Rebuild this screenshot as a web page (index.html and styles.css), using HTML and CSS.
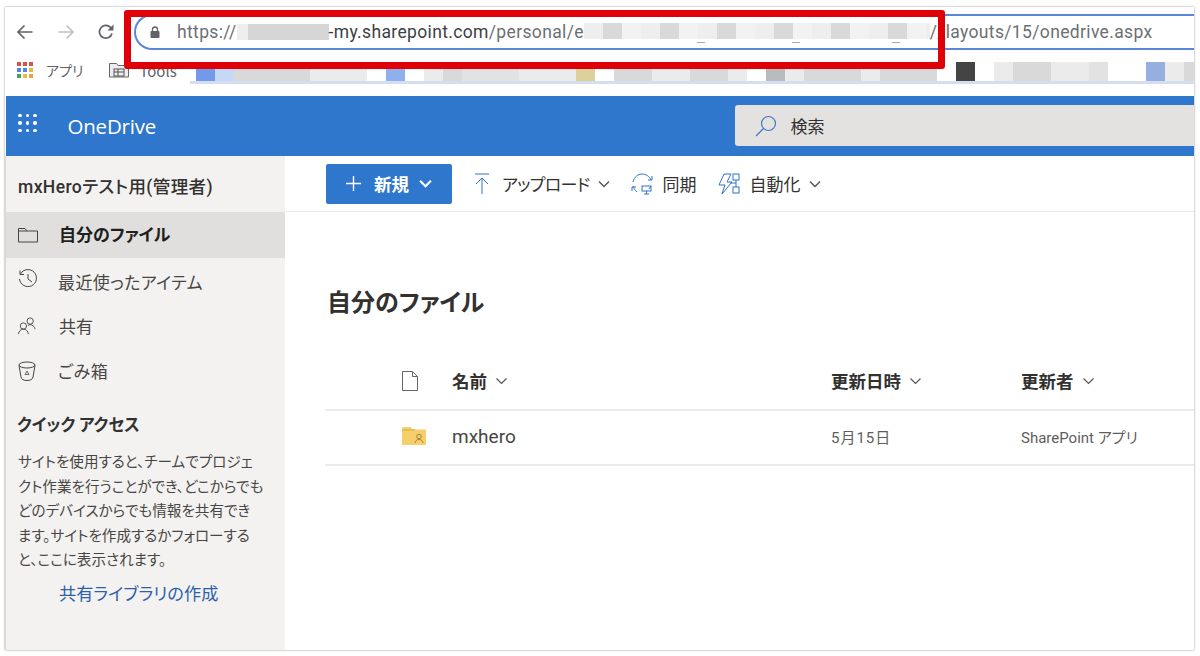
FILE: index.html
```html
<!DOCTYPE html>
<html lang="ja">
<head>
<meta charset="utf-8">
<title>OneDrive</title>
<link rel="stylesheet" href="styles.css">
</head>
<body>
<div class="window">
  <div class="toolbar">
    <svg class="nav-icon" viewBox="0 0 18 18"><path d="M16.5 9H2M8.5 2.5 2 9l6.5 6.5" fill="none" stroke="#5f6368" stroke-width="1.7"/></svg>
    <svg class="nav-icon" viewBox="0 0 18 18"><path d="M1.5 9H16M9.5 2.5 16 9l-6.5 6.5" fill="none" stroke="#bdc1c6" stroke-width="1.7"/></svg>
    <svg class="nav-icon" viewBox="0 0 18 18"><path d="M15 10.5A6.4 6.4 0 1 1 13.3 4.2L15.5 6.3" fill="none" stroke="#5f6368" stroke-width="1.7"/><path d="M16.5 1.5v6h-6z" fill="#5f6368"/></svg>
    <div class="omnibox">
      <svg class="lock" viewBox="0 0 10 12"><path d="M2.5 5V3.5a2.5 2.5 0 0 1 5 0V5" fill="none" stroke="#5f6368" stroke-width="1.3"/><rect x="0.5" y="5" width="9" height="7" rx="1" fill="#5f6368"/></svg>
      <span class="url">https://</span>
      <span class="blur blur-a"></span>
      <span class="url url-dark">-my.sharepoint.com</span><span class="url">/personal/e</span>
      <span class="blur blur-b"></span>
      <span class="url">/_layouts/15/onedrive.aspx</span>
    </div>
  </div>
  <div class="bookmarks">
    <svg class="apps" viewBox="0 0 16 16">
      <rect x="0" y="0" width="4" height="4" fill="#d9534a"/><rect x="6" y="0" width="4" height="4" fill="#d9534a"/><rect x="12" y="0" width="4" height="4" fill="#d9534a"/>
      <rect x="0" y="6" width="4" height="4" fill="#4f86e8"/><rect x="6" y="6" width="4" height="4" fill="#4f86e8"/><rect x="12" y="6" width="4" height="4" fill="#e8b93c"/>
      <rect x="0" y="12" width="4" height="4" fill="#46a35c"/><rect x="6" y="12" width="4" height="4" fill="#e8b93c"/><rect x="12" y="12" width="4" height="4" fill="#e8a33c"/>
    </svg>
    <span class="bm-label">アプリ</span>
    <svg class="bm-folder" viewBox="0 0 20 16"><path d="M.5 15V1.5h7l1.5 2h10.500V15z" fill="#eee" stroke="#666"/><rect x="5" y="7" width="10" height="7" fill="none" stroke="#555"/><path d="M5 10h10M9 7v7" stroke="#555"/></svg>
    <span class="bm-label bm-tools">Tools</span>
    <div class="bm-strip">
      <i class="c1 w19"></i><i class="c2 w19"></i><i class="c3 w38"></i><i class="c3 w38"></i><i class="c4 w38"></i><i class="c4 w19"></i><i class="c5 w19"></i><i class="c1b w19"></i><i class="c5 w19"></i><i class="c4 w19"></i><i class="c3 w19"></i><i class="c3b w57"></i><i class="c4 w57"></i><i class="c6 w19"></i><i class="c5 w19"></i><i class="c3 w38"></i><i class="c4 w38"></i><i class="c3 w38"></i><i class="c4 w19"></i><i class="c5 w19"></i><i class="c7 w19"></i><i class="c4 w19"></i><i class="c3 w57"></i><i class="c4 w19"></i><i class="c3 w57"></i><i class="c5 w19"></i><i class="c8 w19"></i><i class="c5 w19"></i><i class="c4 w19"></i><i class="c3 w38"></i><i class="c4 w38"></i><i class="c3b w19"></i><i class="c5 w38"></i><i class="c2b w19"></i><i class="c4 w19"></i><i class="c3 w19"></i>
    </div>
  </div>
  <header class="suitebar">
    <div class="waffle"><i></i><i></i><i></i><i></i><i></i><i></i><i></i><i></i><i></i></div>
    <span class="brand">OneDrive</span>
    <div class="search">
      <svg class="search-icon" viewBox="0 0 22 22"><circle cx="13.5" cy="8.5" r="7" fill="none" stroke="#3f78c4" stroke-width="1.2"/><path d="M8.5 13.5 1 21" stroke="#3f78c4" stroke-width="1.2"/></svg>
      <span>検索</span>
    </div>
  </header>
  <div class="app">
    <nav class="sidebar">
      <div class="tenant">mxHeroテスト用(管理者)</div>
      <a class="nav-item active">
        <svg viewBox="0 0 20 16"><path d="M.5 15V1.5h6.5l2 2.5h10.500v11z" fill="none" stroke="#444"/><path d="M.5 4H9" stroke="#444"/></svg>
        <span>自分のファイル</span>
      </a>
      <a class="nav-item recent">
        <svg viewBox="0 0 20 20"><path d="M2.5 5A8.5 8.5 0 1 1 1.5 10M2 1.5V5.5h4M10 5v5l4 3" fill="none" stroke="#444"/></svg>
        <span>最近使ったアイテム</span>
      </a>
      <a class="nav-item shared">
        <svg viewBox="0 0 20 20"><circle cx="13.5" cy="4.5" r="3.5" fill="none" stroke="#444"/><circle cx="6" cy="10" r="3.5" fill="none" stroke="#444"/><path d="M.5 19c.5-3.5 2.500-5.5 5.500-5.5s5 2 5.500 5.500M11 9.500c.8-.8 1.500-1 2.500-1 3 0 5 2.500 5.500 5" fill="none" stroke="#444"/></svg>
        <span>共有</span>
      </a>
      <a class="nav-item trash">
        <svg viewBox="0 0 18 20"><ellipse cx="9" cy="4" rx="8" ry="3" fill="none" stroke="#444"/><path d="M1 4.500 3 16c.3 2.500 3 3.500 6 3.500s5.700-1 6-3.500L17 4.500" fill="none" stroke="#444"/><path d="M7 13.500l2-3.500 2 3.500z" fill="none" stroke="#444" stroke-width=".8"/></svg>
        <span>ごみ箱</span>
      </a>
      <h2 class="quick-title">クイック アクセス</h2>
      <p class="quick-text">サイトを使用すると、チームでプロジェ<br>クト作業を行うことができ、どこからでも<br>どのデバイスからでも情報を共有でき<br>ます。サイトを作成するかフォローする<br>と、ここに表示されます。</p>
      <a class="create-lib">共有ライブラリの作成</a>
    </nav>
    <main class="content">
      <div class="commandbar">
        <button class="new-btn">
          <svg viewBox="0 0 18 18"><path d="M9 1v16M1 9h16" stroke="#fff" stroke-width="1.5"/></svg>
          <span>新規</span>
          <svg class="chev-w" viewBox="0 0 12 8"><path d="M1 1.500 6 6.500 11 1.500" fill="none" stroke="#fff" stroke-width="2"/></svg>
        </button>
        <div class="cmd cmd-upload">
          <svg viewBox="0 0 16 22"><path d="M1 1h14M8 21V5M2 11l6-6 6 6" fill="none" stroke="#2f74c8" stroke-width="1"/></svg>
          <span>アップロード</span>
          <svg class="chev" viewBox="0 0 12 8"><path d="M1 1.500 6 6.500 11 1.500" fill="none" stroke="#555" stroke-width="1.4"/></svg>
        </div>
        <div class="cmd cmd-sync">
          <svg viewBox="0 0 22 22"><path d="M2 9C3 4 7 1 11 1s7 2 9 6M20 13c-1 1-1 2-2 3M2 13c.5 1.500 1.500 4 4 6" fill="none" stroke="#2f74c8"/><path d="M17 7h4V3M1 18v-4h4" fill="none" stroke="#2f74c8"/><rect x="11" y="13" width="9" height="5" fill="none" stroke="#2f74c8"/><path d="M13 21h5M15.500 18v3" stroke="#2f74c8"/></svg>
          <span>同期</span>
        </div>
        <div class="cmd cmd-auto">
          <svg viewBox="0 0 22 22"><path d="M6 1h7l-4 8h5L4 21l3-9H1z" fill="none" stroke="#2f74c8"/><rect x="15" y="1" width="6" height="6" fill="none" stroke="#2f74c8"/><rect x="15" y="14" width="6" height="6" fill="none" stroke="#2f74c8"/><path d="M18 7v7M12 10h6" stroke="#2f74c8"/></svg>
          <span>自動化</span>
          <svg class="chev" viewBox="0 0 12 8"><path d="M1 1.500 6 6.500 11 1.500" fill="none" stroke="#555" stroke-width="1.4"/></svg>
        </div>
      </div>
      <h1 class="page-title">自分のファイル</h1>
      <div class="list">
        <div class="row head">
          <div class="col-icon"><svg class="file-icon" viewBox="0 0 16 20"><path d="M.5.5h10l5 5v14H.5zM10.500.5v5h5" fill="#fff" stroke="#666"/></svg></div>
          <div class="col-name"><b>名前</b><svg class="chev" viewBox="0 0 12 8"><path d="M1 1.500 6 6.500 11 1.500" fill="none" stroke="#555" stroke-width="1.2"/></svg></div>
          <div class="col-date"><b>更新日時</b><svg class="chev" viewBox="0 0 12 8"><path d="M1 1.500 6 6.500 11 1.500" fill="none" stroke="#555" stroke-width="1.2"/></svg></div>
          <div class="col-by"><b>更新者</b><svg class="chev" viewBox="0 0 12 8"><path d="M1 1.500 6 6.500 11 1.500" fill="none" stroke="#555" stroke-width="1.2"/></svg></div>
        </div>
        <div class="row item">
          <div class="col-icon"><svg class="folder-icon" viewBox="0 0 24 18"><path d="M0 1.500A1.500 1.500 0 0 1 1.500 0h7l2.500 2.500h13V18H0z" fill="#f5cf6b"/><path d="M0 3h11l2-.5" stroke="#dba93a" fill="none"/><circle cx="17" cy="9.5" r="2.3" fill="none" stroke="#a0843a"/><path d="M13 16c.5-2.500 2-3.500 4-3.500s3.500 1 4 3.500" fill="none" stroke="#a0843a"/></svg></div>
          <div class="col-name item-name">mxhero</div>
          <div class="col-date item-small">5月15日</div>
          <div class="col-by item-small">SharePoint アプリ</div>
        </div>
      </div>
    </main>
  </div>
  <div class="annotation"></div>
</div>
</body>
</html>
```
FILE: styles.css
```css
* { box-sizing: border-box; }
html, body { margin: 0; height: 100%; background: #fff; overflow: hidden; }
body {
  padding: 7px 6px 6px 5px;
  font-family: "Noto Sans CJK JP", "Noto Sans", sans-serif;
  font-feature-settings: "palt";
  color: #323130;
}
.window {
  position: relative;
  height: 643px;
  display: flex;
  flex-direction: column;
  background: #fff;
  box-shadow: 0 0 2px rgba(0,0,0,.45);
  overflow: hidden;
}
.toolbar {
  height: 49px;
  display: flex;
  align-items: center;
  padding: 0 0 0 11px;
  flex: none;
}
.nav-icon { width: 18px; height: 18px; margin-right: 23px; flex: none; }
.nav-icon:nth-child(3) { margin-right: 19px; margin-left: -1px; }
.omnibox {
  flex: 1;
  height: 36px;
  border: 2px solid #5b86d8;
  border-right: 0;
  border-radius: 18px 0 0 18px;
  display: flex;
  align-items: center;
  padding-left: 14px;
  font-family: "Roboto", sans-serif;
  font-size: 17.5px;
  white-space: nowrap;
}
.lock { width: 10px; height: 12px; margin-right: 17px; flex: none; }
.url { color: #6b6f73; letter-spacing: .35px; }
.url-dark { color: #3c4043; }
.blur { display: block; flex: none; }
.blur-a { width: 92px; height: 16px; background: linear-gradient(90deg, #eee 0 12%, #d6d6d6 12% 100%); }
.blur-b {
  width: 346px;
  height: 21px;
  margin-top: 4px;
  background:
    linear-gradient(#aaa, #aaa) 113px 19px / 8px 1px no-repeat,
    linear-gradient(#aaa, #aaa) 208px 19px / 8px 1px no-repeat,
    linear-gradient(#aaa, #aaa) 308px 19px / 8px 1px no-repeat,
    repeating-linear-gradient(90deg, #eee 0 19px, #d9d9d9 19px 38px, #f2f2f2 38px 57px) 0 0 / 100% 16px no-repeat;
}
.bookmarks {
  height: 40px;
  display: flex;
  align-items: center;
  padding: 0 0 12px 12px;
  font-size: 14px;
  flex: none;
  position: relative;
}
.apps { width: 16px; height: 16px; margin-right: 13px; flex: none; }
.bm-label { color: #5f6368; white-space: nowrap; }
.bm-tools { font-size: 15px; margin-top: 1px; }
.bm-folder { width: 20px; height: 16px; margin: 0 10px 0 26px; flex: none; }
.bm-strip {
  position: absolute;
  left: 185px;
  right: 0;
  top: 6px;
  height: 22px;
  display: flex;
  padding-left: 6px;
  overflow: hidden;
  border-bottom: 3px solid #d3dff0;
}
.bm-strip i { display: block; height: 19px; flex: none; }
.w19 { width: 19px; }
.w38 { width: 38px; }
.w57 { width: 57px; }
.c1 { background: #7299ea; }
.c1b { background: #8eb0ec; }
.c2 { background: #c6d8f5; }
.c2b { background: #97afe0; }
.c3 { background: #d9d9d9; }
.c3b { background: #e2e2e2; }
.c4 { background: #ebebeb; }
.c5 { background: #fff; }
.c6 { background: #ddd09c; }
.c7 { background: #b8bbbb; }
.c8 { background: #444; }
.suitebar {
  height: 60px;
  flex: none;
  background: #2f77cc;
  display: flex;
  align-items: center;
  color: #fff;
  border-left: 1px solid #fff;
  padding-left: 12px;
}
.waffle {
  display: grid;
  grid-template-columns: repeat(3, 3.5px);
  gap: 4px;
  margin-bottom: 6px;
}
.waffle i { width: 3.5px; height: 3.5px; border-radius: 50%; background: #fff; }
.brand {
  font-family: "Open Sans", sans-serif;
  font-size: 20.5px;
  margin-left: 31px;
  width: 667px;
  letter-spacing: -.2px;
}
.search {
  width: 459px;
  height: 41px;
  background: #e4e2e0;
  border-radius: 3px 0 0 3px;
  display: flex;
  align-items: center;
  padding-left: 20px;
  color: #323130;
  font-size: 17px;
  flex: none;
  margin-bottom: 1px;
}
.search-icon { width: 22px; height: 22px; margin-right: 14px; }
.app { flex: 1; display: flex; min-height: 0; }
.sidebar {
  width: 280px;
  flex: none;
  background: #f3f2f1;
  border-left: 1px solid #d8d8d8;
  display: flex;
  flex-direction: column;
  font-size: 17px;
}
.tenant {
  height: 56px;
  display: flex;
  align-items: center;
  padding: 2px 0 0 12px;
  font-size: 17.5px;
  font-weight: 500;
  letter-spacing: .4px;
  font-family: "Roboto", "Noto Sans CJK JP", sans-serif;
  white-space: nowrap;
}
.nav-item {
  height: 45px;
  display: flex;
  align-items: center;
  padding-left: 12px;
  color: #484644;
}
.nav-item svg { width: 20px; height: 20px; flex: none; margin-right: 20px; }
.nav-item.active { height: 46px; background: #e1dfdd; font-weight: 700; color: #201f1e; }
.nav-item.active svg { height: 16px; }
.nav-item.active span { margin: 0 0 3px 1px; }
.recent svg { margin-top: -4px; }
.recent span { margin-top: 2px; letter-spacing: .4px; }
.shared svg { width: 18px; margin-right: 23px; }
.trash svg { width: 18px; margin-right: 22px; }
.trash span { letter-spacing: .6px; }
.quick-title {
  font-size: 16.5px;
  font-weight: 700;
  margin: 19px 0 0 11px;
  line-height: 24px;
}
.quick-text {
  margin: 13px 0 0 12px;
  width: 262px;
  font-size: 14.6px;
  line-height: 24.5px;
  color: #484644;
  white-space: nowrap;
}
.create-lib { margin: 9px 0 0 53px; color: #2b5fa8; font-size: 17.2px; line-height: 24px; }
.content { flex: 1; min-width: 0; }
.commandbar {
  height: 56px;
  display: flex;
  align-items: center;
  padding-left: 41px;
  border-bottom: 1px solid #edebe9;
  font-size: 17px;
}
.new-btn {
  width: 126px;
  height: 40px;
  background: #2f77cc;
  border: 0;
  border-radius: 2px;
  color: #fff;
  font: 700 17.5px "Noto Sans CJK JP", sans-serif;
  font-feature-settings: "palt";
  display: flex;
  align-items: center;
  padding: 0 0 0 19px;
}
.new-btn svg { width: 17px; height: 17px; margin-right: 12px; }
.new-btn .chev-w { width: 13px; height: 9px; margin: 0 0 0 10px; }
.cmd { display: flex; align-items: center; }
.cmd svg { width: 22px; height: 22px; margin-right: 9px; flex: none; }
.cmd .chev { width: 12px; height: 8px; margin: 0 0 0 9px; }
.cmd-upload { margin-left: 22px; }
.cmd-upload svg:first-child { width: 16px; margin-right: 12px; }
.cmd-upload span { letter-spacing: -.7px; }
.cmd-sync { margin-left: 21px; }
.cmd-auto { margin-left: 22px; }
.page-title {
  font-size: 24px;
  font-weight: 700;
  line-height: 34px;
  margin: 72px 0 0 42px;
}
.list { margin: 37px 0 0 40px; }
.row { display: flex; align-items: center; }
.head { height: 56px; padding-bottom: 3px; border-bottom: 2px solid #edebe9; font-size: 17.5px; }
.head b { font-weight: 700; }
.head .chev { width: 13px; height: 8px; margin-left: 8px; }
.item { height: 55px; padding-bottom: 3px; border-bottom: 2px solid #edebe9; }
.col-icon { width: 127px; padding-left: 77px; display: flex; flex: none; }
.col-name { width: 379px; display: flex; align-items: center; flex: none; }
.col-date { width: 190px; display: flex; align-items: center; flex: none; }
.col-by { flex: 1; display: flex; align-items: center; white-space: nowrap; }
.file-icon { width: 16px; height: 20px; }
.folder-icon { width: 24px; height: 18px; }
.item-name { font-family: "Roboto", sans-serif; font-size: 19px; color: #484644; }
.item-small { font-size: 15px; color: #605e5c; font-family: "Roboto", "Noto Sans CJK JP", sans-serif; }
.col-date.item-small { letter-spacing: 1px; }
.annotation {
  position: absolute;
  left: 119px;
  top: 3px;
  width: 821px;
  height: 59px;
  border: 7px solid #e00008;
  border-radius: 3px;
  pointer-events: none;
}
```
